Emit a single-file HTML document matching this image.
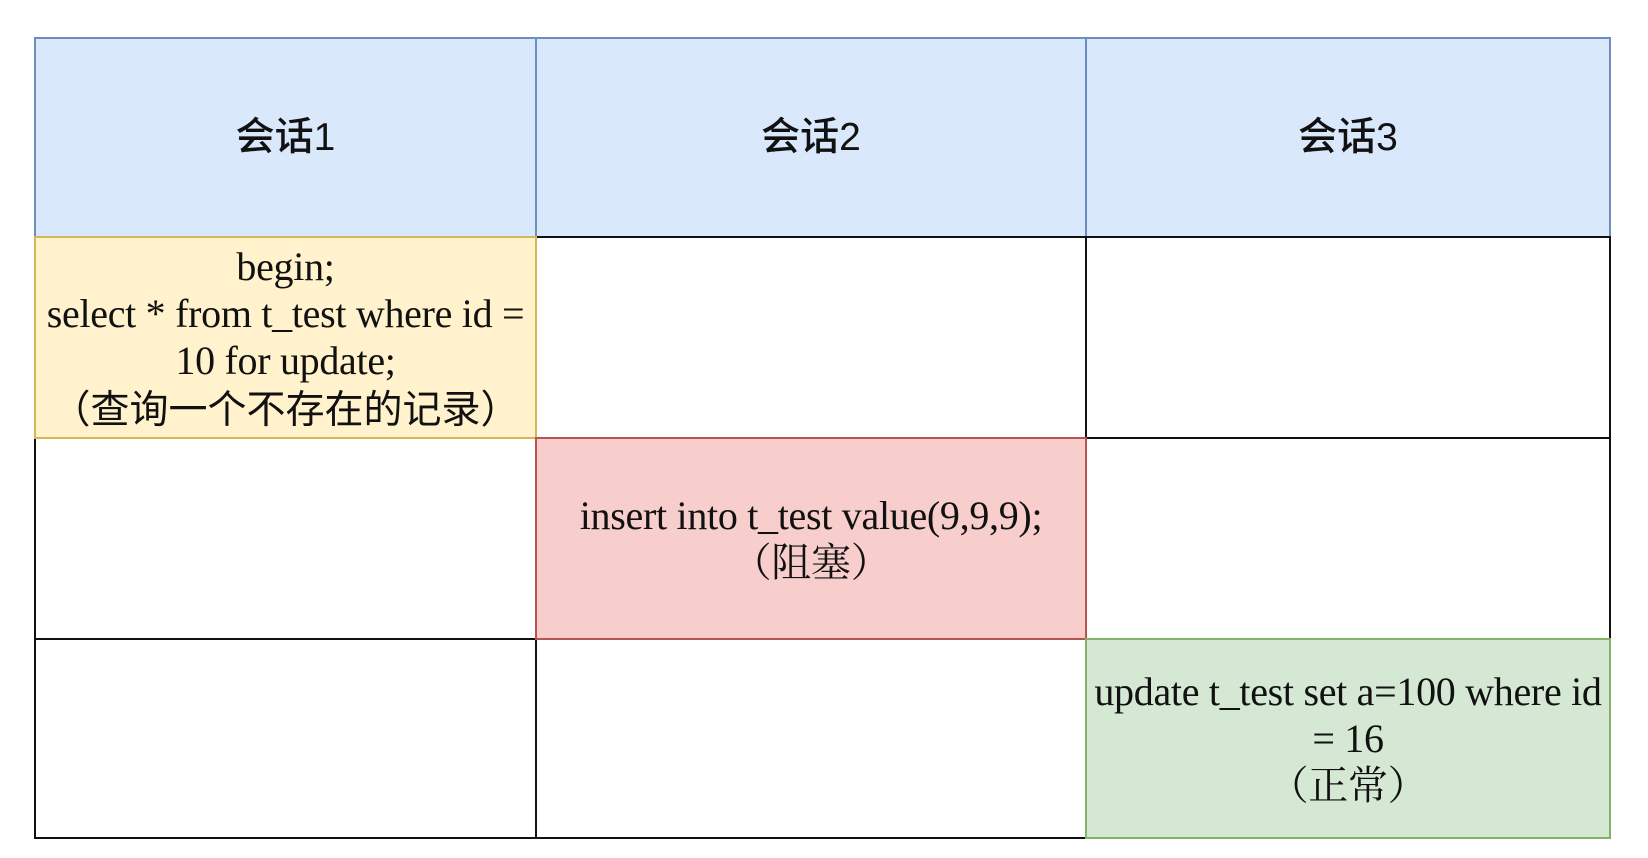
<!DOCTYPE html>
<html><head><meta charset="utf-8"><style>
body{margin:0;width:1648px;height:858px;background:#fff;position:relative;overflow:hidden}
.c{position:absolute;box-sizing:border-box;display:flex;align-items:center;justify-content:center;text-align:center;font-family:"Liberation Serif","Noto Serif CJK SC",serif;font-size:40px;line-height:47px;color:#111;letter-spacing:-0.3px;white-space:nowrap}
.h{background:#dae8fc;border:2px solid #6c8ebf;font-family:"Liberation Sans","Noto Sans CJK SC",sans-serif;font-size:39px;font-weight:500;letter-spacing:0}
.w{background:#fff;border:2px solid #111}
</style></head><body>
<div class="c h" style="left:34px;top:37px;width:503px;height:201px">会话1</div>
<div class="c h" style="left:535px;top:37px;width:552px;height:201px">会话2</div>
<div class="c h" style="left:1085px;top:37px;width:526px;height:201px">会话3</div>

<div class="c w" style="left:535px;top:236px;width:552px;height:203px"></div>
<div class="c w" style="left:1085px;top:236px;width:526px;height:203px"></div>
<div class="c w" style="left:34px;top:437px;width:503px;height:203px"></div>
<div class="c w" style="left:1085px;top:437px;width:526px;height:203px"></div>
<div class="c w" style="left:34px;top:638px;width:503px;height:201px"></div>
<div class="c w" style="left:535px;top:638px;width:552px;height:201px"></div>

<div class="c" style="left:34px;top:236px;width:503px;height:203px;background:#fff2cc;border:2px solid #d6b656"><div>begin;<br>select * from t_test where id =<br>10 for update;<br><span style="font-family:'Noto Sans CJK SC',sans-serif;font-size:39px;letter-spacing:0">（查询一个不存在的记录）</span></div></div>
<div class="c" style="left:535px;top:437px;width:552px;height:203px;background:#f8cecc;border:2px solid #b85450"><div>insert into t_test value(9,9,9);<br>（阻塞）</div></div>
<div class="c" style="left:1085px;top:638px;width:526px;height:201px;background:#d5e8d4;border:2px solid #82b366"><div>update t_test set a=100 where id<br>= 16<br>（正常）</div></div>
</body></html>
